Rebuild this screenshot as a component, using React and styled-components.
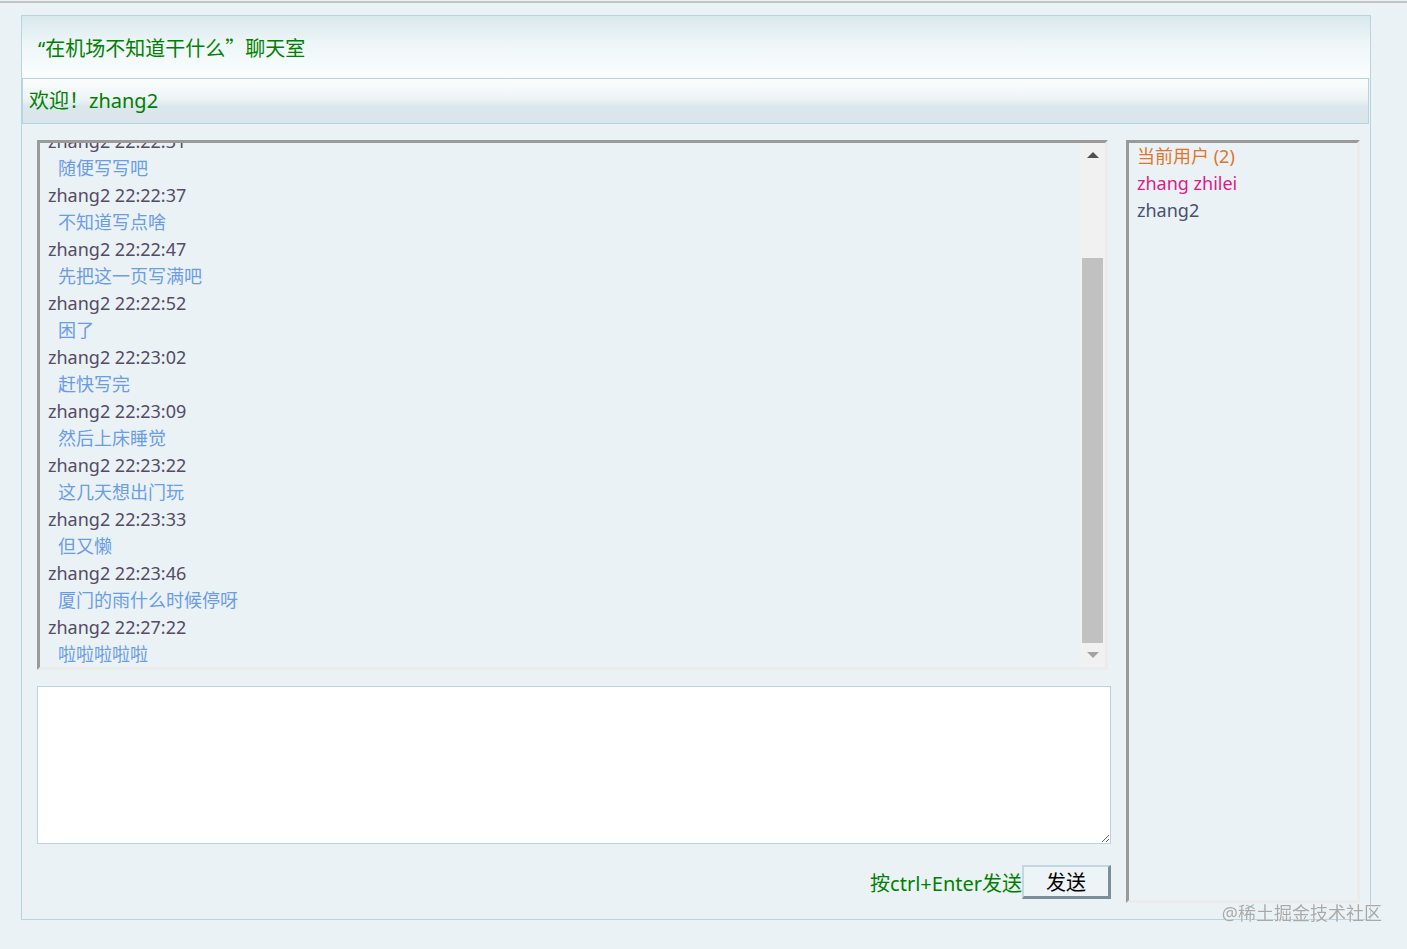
import React from "react";
import styled, { createGlobalStyle } from "styled-components";

const GlobalStyle = createGlobalStyle`
  html, body {
    margin: 0;
    padding: 0;
    background: #eaf2f5;
    font-family: "Noto Sans", "Noto Sans CJK SC", sans-serif;
  }
`;

const Page = styled.div`
  border-top: 2px solid #c4c4c4;
  margin-top: 1px;
  padding: 12px 0 0 21px;
  min-height: 930px;
  box-sizing: border-box;
`;

const Room = styled.div`
  width: 1350px;
  border: 1px solid #b8d4e0;
  box-sizing: border-box;
`;

const TitleBar = styled.div`
  height: 62px;
  display: flex;
  align-items: center;
  padding-left: 16px;
  background: linear-gradient(#d9e8ec 0%, #eef6f8 45%, #fbfefe 100%);
  color: #008000;
  font-size: 20px;
`;

const CloseQuote = styled.span`
  font-family: "Noto Sans CJK SC", sans-serif;
`;

const WelcomeBar = styled.div`
  height: 46px;
  margin-right: 1px;
  box-sizing: border-box;
  border: 1px solid #b8d4e0;
  display: flex;
  align-items: center;
  padding: 0 0 3px 6px;
  background: linear-gradient(#fbfdfd 0%, #eef4f6 45%, #dbe7ec 62%, #dae6eb 100%);
  color: #008000;
  font-size: 20px;
`;

const Body = styled.div`
  display: flex;
  align-items: flex-start;
  gap: 15px;
  padding: 16px 0 16px 15px;
`;

const LeftColumn = styled.div`
  width: 1074px;
  display: flex;
  flex-direction: column;
`;

const ChatBox = styled.div`
  width: 1071px;
  height: 530px;
  box-sizing: border-box;
  border-style: solid;
  border-width: 3px;
  border-color: #9a9a9a #ebebeb #ebebeb #9a9a9a;
  display: flex;
`;

const Messages = styled.div`
  flex: 1;
  overflow: hidden;
  display: flex;
  flex-direction: column;
  justify-content: flex-end;
  padding-left: 8px;
`;

const Line = styled.div`
  height: 27px;
  line-height: 29px;
  font-size: 18px;
  white-space: nowrap;
  color: ${(p) => (p.$msg ? "#6b9ce8" : "#554b66")};
  padding-left: ${(p) => (p.$msg ? "10px" : "0")};
`;

const ScrollTrack = styled.div`
  width: 25px;
  background: #f1f1f1;
  display: flex;
  flex-direction: column;
  align-items: center;
`;

const ScrollButton = styled.div`
  height: 24px;
  width: 100%;
  display: flex;
  align-items: center;
  justify-content: center;

  &::after {
    content: "";
    border-left: 6px solid transparent;
    border-right: 6px solid transparent;
    ${(p) =>
      p.$down
        ? "border-top: 6px solid #a3a3a3;"
        : "border-bottom: 6px solid #505050;"}
  }
`;

const Thumb = styled.div`
  margin-top: auto;
  width: 21px;
  height: ${(p) => p.$size}px;
  background: #c1c1c1;
`;

const Input = styled.textarea`
  margin-top: 16px;
  width: 1074px;
  height: 158px;
  box-sizing: border-box;
  border: 1px solid #b8d4e0;
  background: #fff;
  outline: none;
  font-family: inherit;
  font-size: 16px;
`;

const SendRow = styled.div`
  margin-top: 21px;
  display: flex;
  justify-content: flex-end;
  align-items: center;
`;

const Hint = styled.span`
  color: #008000;
  font-size: 20px;
`;

const SendButton = styled.button`
  width: 89px;
  height: 34px;
  box-sizing: border-box;
  border-style: solid;
  border-width: 2px 3px 3px 2px;
  border-color: #c2d8e1 #7d8e98 #7d8e98 #c2d8e1;
  background: #edf3f6;
  color: #000;
  font-family: inherit;
  font-size: 20px;
  padding: 0;
`;

const UserPanel = styled.div`
  width: 234px;
  height: 763px;
  box-sizing: border-box;
  border-style: solid;
  border-width: 3px;
  border-color: #9a9a9a #ebebeb #ebebeb #9a9a9a;
  padding-left: 8px;
`;

const UserLine = styled.div`
  height: 27px;
  line-height: 27px;
  font-size: 18px;
  color: ${(p) => p.$color};
`;

const Watermark = styled.div`
  position: fixed;
  right: 25px;
  bottom: 24px;
  font-size: 18px;
  color: #a9a9a9;
  text-shadow: 0 0 1px #fff;
`;

const chat = [
  ["zhang zhilei 22:21:40", "你好"],
  ["zhang2 22:22:05", "在机场等飞机呢"],
  ["zhang2 22:22:31", "随便写写吧"],
  ["zhang2 22:22:37", "不知道写点啥"],
  ["zhang2 22:22:47", "先把这一页写满吧"],
  ["zhang2 22:22:52", "困了"],
  ["zhang2 22:23:02", "赶快写完"],
  ["zhang2 22:23:09", "然后上床睡觉"],
  ["zhang2 22:23:22", "这几天想出门玩"],
  ["zhang2 22:23:33", "但又懒"],
  ["zhang2 22:23:46", "厦门的雨什么时候停呀"],
  ["zhang2 22:27:22", "啦啦啦啦啦"],
];

export default function App() {
  return (
    <Page>
      <GlobalStyle />
      <Room>
        <TitleBar>
          “在机场不知道干什么<CloseQuote>”</CloseQuote>聊天室
        </TitleBar>
        <WelcomeBar>欢迎！zhang2</WelcomeBar>
        <Body>
          <LeftColumn>
            <ChatBox>
              <Messages>
                {chat.map(([who, text]) => (
                  <React.Fragment key={who}>
                    <Line>{who}</Line>
                    <Line $msg>{text}</Line>
                  </React.Fragment>
                ))}
              </Messages>
              <ScrollTrack>
                <ScrollButton />
                <Thumb $size={385} />
                <ScrollButton $down />
              </ScrollTrack>
            </ChatBox>
            <Input />
            <SendRow>
              <Hint>按ctrl+Enter发送</Hint>
              <SendButton>发送</SendButton>
            </SendRow>
          </LeftColumn>
          <UserPanel>
            <UserLine $color="#e2742a">当前用户 (2)</UserLine>
            <UserLine $color="#dd1a8c">zhang zhilei</UserLine>
            <UserLine $color="#4a4f72">zhang2</UserLine>
          </UserPanel>
        </Body>
      </Room>
      <Watermark>@稀土掘金技术社区</Watermark>
    </Page>
  );
}
